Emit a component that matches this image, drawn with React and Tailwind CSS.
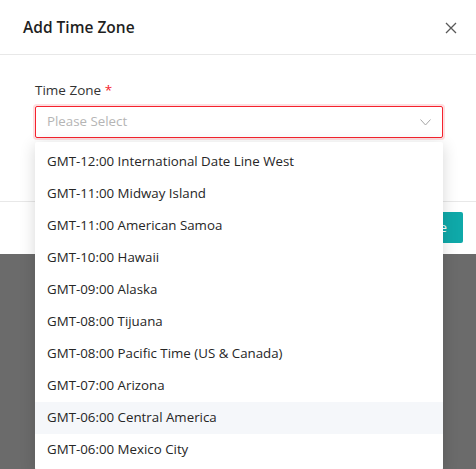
import React, { useState } from 'react';

const zones = [
  'GMT-12:00 International Date Line West',
  'GMT-11:00 Midway Island',
  'GMT-11:00 American Samoa',
  'GMT-10:00 Hawaii',
  'GMT-09:00 Alaska',
  'GMT-08:00 Tijuana',
  'GMT-08:00 Pacific Time (US & Canada)',
  'GMT-07:00 Arizona',
  'GMT-06:00 Central America',
  'GMT-06:00 Mexico City',
];

const App = () => {
  const [hovered, setHovered] = useState(8);

  return (
    <div className="h-[469px] w-full bg-[#6b6b6b] overflow-hidden font-['Open_Sans',sans-serif] text-[#262626]">
      {/* Modal */}
      <div className="relative bg-white h-[254px] flex flex-col">
        {/* Header */}
        <div className="h-[55px] border-b border-[#e8e8e8] flex items-center justify-between pl-[23px] pr-[19px] shrink-0">
          <h2 className="text-[15.5px] font-semibold text-[#1f1f1f] mt-[1px]">Add Time Zone</h2>
          <svg width="12" height="12" viewBox="0 0 12 12" className="mt-[2px]">
            <path d="M1 1 L11 11 M11 1 L1 11" stroke="#595959" strokeWidth="1.3" fill="none" />
          </svg>
        </div>

        {/* Body */}
        <div className="flex-1 pl-[35px] pr-[33px] pt-[25px]">
          <label className="block text-[13.5px] text-[#333] leading-[20px] mb-[6px]">
            Time Zone <span className="text-[#f5222d]">*</span>
          </label>
          <div className="relative">
            <div className="h-[32px] border border-[#f5222d] rounded-[2px] shadow-[0_0_0_2px_rgba(245,34,45,0.15)] flex items-center justify-between pl-[11px] pr-[11px]">
              <span className="text-[13.3px] text-[#b5b5b5]">Please Select</span>
              <svg width="11" height="7" viewBox="0 0 11 7">
                <path d="M0.5 0.5 L5.5 6 L10.5 0.5" stroke="#a6a6a6" strokeWidth="1" fill="none" />
              </svg>
            </div>

            {/* Dropdown */}
            <div className="absolute left-0 right-0 top-[36px] z-10 bg-white rounded-[2px] shadow-[0_3px_16px_rgba(0,0,0,0.16)] py-[4px]">
              {zones.map((z, i) => (
                <div
                  key={z}
                  onMouseEnter={() => setHovered(i)}
                  className={`h-[32px] flex items-center px-[12px] text-[13.3px] text-[#262626] ${hovered === i ? 'bg-[#f5f7fa]' : ''}`}
                >
                  {z}
                </div>
              ))}
            </div>
          </div>
        </div>

        {/* Footer */}
        <div className="h-[53px] border-t border-[#e8e8e8] flex items-start pt-[10px] justify-end pr-[13px] shrink-0">
          <button className="h-[31px] px-[16px] bg-[#0fa9a9] text-white text-[13.3px] rounded-[2px]">Save</button>
        </div>
      </div>
    </div>
  );
};

export default App;
